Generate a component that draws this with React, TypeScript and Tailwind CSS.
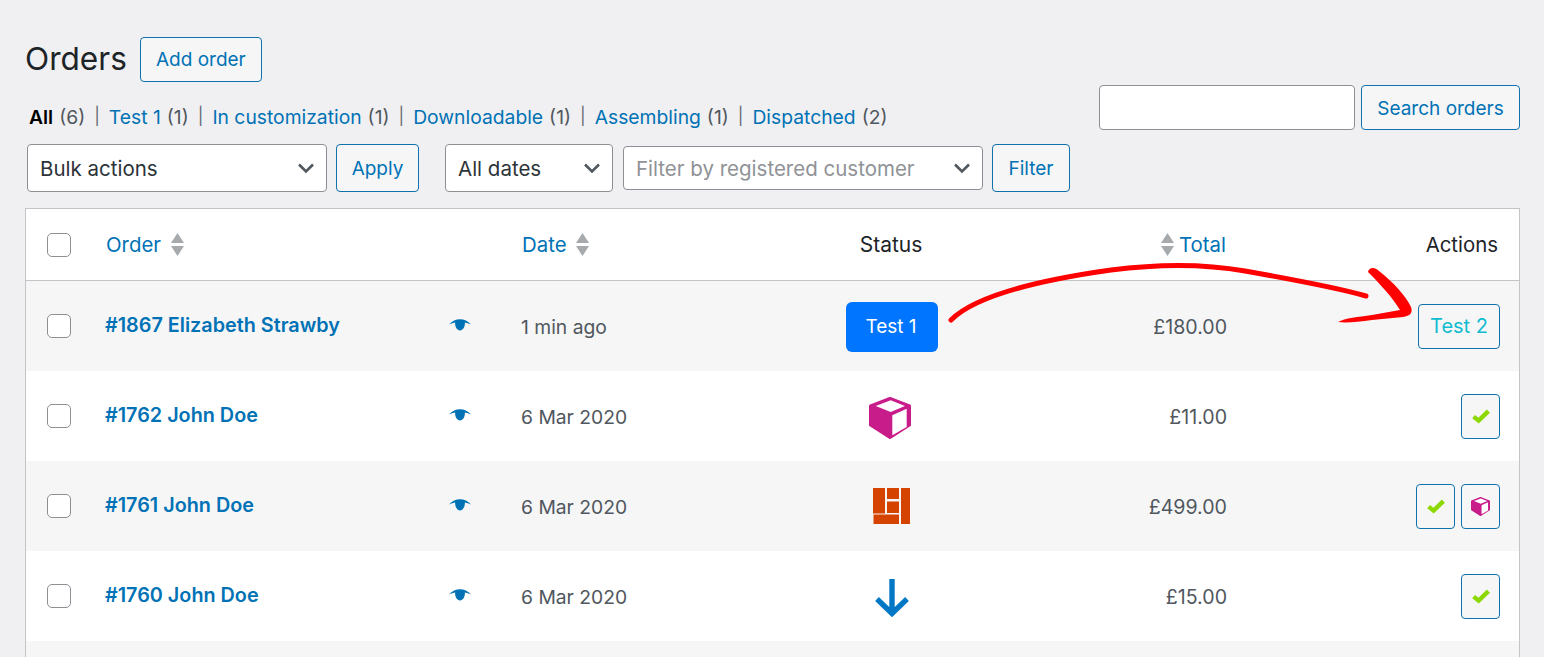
import React from "react";

const Chevron = () => (
  <svg width="18" height="12" viewBox="0 0 18 12" className="shrink-0">
    <path d="M2 2.5 L9 9.5 L16 2.5" fill="none" stroke="#50575e" strokeWidth="2.6" />
  </svg>
);

const Sort = () => (
  <svg width="13" height="23" viewBox="0 0 13 23" className="shrink-0">
    <path d="M6.5 0 L13 10 H0 Z M0 13 H13 L6.5 23 Z" fill="#a7aaad" />
  </svg>
);

const Eye = () => (
  <svg width="22" height="12" viewBox="0 0 22 12">
    <path
      d="M0 5.4 C3 2 7 0.2 11 0.2 C15 0.2 19 2 22 5.4 C19.8 4.4 17.8 3.8 15.9 3.5 C16 8 14 11.4 11 11.4 C8 11.4 6 8 6.1 3.5 C4.2 3.8 2.2 4.4 0 5.4 Z"
      fill="#0072b5"
    />
  </svg>
);

const Cube = ({ size }: { size: number }) => (
  <svg width={size} height={size} viewBox="0 0 42 42">
    <path
      d="M21 1.5 L40.5 9 V28 L21 40.5 L1.5 28 V9 Z"
      fill="#c71c89"
      stroke="#c71c89"
      strokeWidth="3"
      strokeLinejoin="round"
    />
    <path d="M6.7 9 L21.7 3.3 L36 9 L21.7 15 Z" fill="#fff" />
    <path d="M23.3 18.3 L37.7 11.7 V30 L23.3 38.3 Z" fill="#fff" />
  </svg>
);

const Blocks = () => (
  <svg width="37" height="36" viewBox="0 0 37 36">
    <g fill="#d54300">
      <rect x="0" y="0" width="12" height="25.5" />
      <rect x="14" y="0" width="12" height="11" />
      <rect x="14" y="13.5" width="12" height="11.5" />
      <rect x="0.5" y="26.5" width="25.5" height="9.5" />
      <rect x="28" y="0" width="9" height="36" />
    </g>
  </svg>
);

const DownArrow = () => (
  <svg width="34" height="38" viewBox="0 0 34 38">
    <path d="M17 0 V34 M2 20 L17 34.5 L32 20" fill="none" stroke="#0277c6" strokeWidth="5.4" />
  </svg>
);

const Check = () => (
  <svg width="18" height="15" viewBox="0 0 18 15">
    <path d="M1.6 7.6 L6.6 11.6 L16.4 2.2" fill="none" stroke="#8cd800" strokeWidth="4.4" />
  </svg>
);

const Box = () => (
  <span className="block w-[24px] h-[24px] rounded-[5px] border border-[#8c8f94] bg-white shrink-0" />
);

const Btn = ({ children, className = "" }: { children: React.ReactNode; className?: string }) => (
  <button className={`h-[48px] rounded-[4px] border border-[#0f71ad] bg-[#f6f6f7] text-[#0072b5] text-[19px] leading-none flex items-center justify-center shrink-0 ${className}`}>
    {children}
  </button>
);

const IconBtn = ({ children }: { children: React.ReactNode }) => (
  <span className="w-[39px] h-[45px] rounded-[4px] border border-[#0f71ad] bg-[#f6f6f7] flex items-center justify-center">
    {children}
  </span>
);

const Select = ({ label, className = "", muted = false }: { label: string; className?: string; muted?: boolean }) => (
  <div className={`rounded-[4px] border border-[#8c8f94] bg-white flex items-center justify-between pl-[12px] pr-[11px] shrink-0 ${className}`}>
    <span className={`text-[20.5px] leading-none pt-[2px] ${muted ? "text-[#8f9296]" : "text-[#2c3338]"}`}>{label}</span>
    <Chevron />
  </div>
);

const cols = "grid grid-cols-[79px_344px_72px_239px_262px_205px_292px] items-center";

const Row = ({
  name,
  date,
  status,
  total,
  actions,
  shaded,
}: {
  name: string;
  date: string;
  status: React.ReactNode;
  total: string;
  actions: React.ReactNode;
  shaded: boolean;
}) => (
  <div className={`${cols} h-[90px] ${shaded ? "bg-[#f6f6f7]" : "bg-white"}`}>
    <div className="pl-[21px]">
      <Box />
    </div>
    <a className="text-[19.8px] font-semibold text-[#0072b5] -mt-[1px]">{name}</a>
    <div className="-mt-[2px]">
      <Eye />
    </div>
    <div className="text-[19.3px] text-[#50575e] mt-[2px]">{date}</div>
    <div className="flex justify-center">{status}</div>
    <div className="text-[19.6px] text-[#50575e] text-right mt-[4px]">{total}</div>
    <div className="flex justify-end gap-[6px] pr-[19px]">{actions}</div>
  </div>
);

const Tab = ({ label, count, last, current }: { label: string; count: number; last?: boolean; current?: boolean }) => (
  <li className="flex items-center">
    <a className={current ? "font-semibold text-black" : "text-[#0072b5]"}>{label}</a>
    <span className="ml-[6px] text-[#50575e]">({count})</span>
    {!last && <span className="mx-[9px] text-[#646970] text-[17px]">|</span>}
  </li>
);

export default function App() {
  return (
    <div
      className="relative h-[657px] overflow-hidden bg-[#f0f0f2] pl-[25px] pr-[24px]"
      style={{ fontFamily: "Inter, 'Liberation Sans', sans-serif" }}
    >
      <div className="flex justify-between">
        <div className="pt-[37px]">
          <div className="flex items-center gap-[13px]">
            <h1 className="text-[31.6px] leading-none text-[#1d2327] -mt-[2px]">Orders</h1>
            <Btn className="w-[122px] !h-[45px]">Add order</Btn>
          </div>
          <ul className="flex items-center text-[19.3px] h-[28px] mt-[21px] pl-[4px]">
            <Tab label="All" count={6} current />
            <Tab label="Test 1" count={1} />
            <Tab label="In customization" count={1} />
            <Tab label="Downloadable" count={1} />
            <Tab label="Assembling" count={1} />
            <Tab label="Dispatched" count={2} last />
          </ul>
          <div className="flex items-center mt-[13px] pl-[2px]">
            <Select label="Bulk actions" className="w-[300px] h-[48px]" />
            <Btn className="w-[83px] ml-[9px] pt-[1px]">Apply</Btn>
            <Select label="All dates" className="w-[168px] h-[48px] ml-[26px]" />
            <Select label="Filter by registered customer" muted className="w-[360px] h-[44px] ml-[10px]" />
            <Btn className="w-[78px] ml-[9px] pt-[1px]">Filter</Btn>
          </div>
        </div>
        <div className="flex gap-[6px] pt-[85px]">
          <div className="w-[256px] h-[45px] rounded-[4px] border border-[#8c8f94] bg-white" />
          <Btn className="w-[159px] !h-[45px] pt-[2px]">Search orders</Btn>
        </div>
      </div>

      <div className="mt-[16px] border border-[#c3c4c7] bg-white">
        <div className={`${cols} h-[71px] border-b border-[#c3c4c7] box-content text-[20.4px]`}>
          <div className="pl-[21px]">
            <Box />
          </div>
          <div className="flex items-center gap-[10px] pl-[1px] text-[#0072b5]">
            <span className="mt-[2px]">Order</span> <Sort />
          </div>
          <div />
          <div className="flex items-center gap-[9px] pl-[1px] text-[#0072b5]">
            <span className="mt-[2px]">Date</span> <Sort />
          </div>
          <div className="text-center text-[21px] text-[#1d2327]">Status</div>
          <div className="flex items-center justify-end gap-[5px] pr-[1px] text-[#0072b5]">
            <Sort /> <span className="mt-[2px]">Total</span>
          </div>
          <div className="text-right pr-[21px] text-[#1d2327] mt-[2px]">Actions</div>
        </div>

        <Row
          shaded
          name="#1867 Elizabeth Strawby"
          date="1 min ago"
          status={
            <span className="w-[92px] h-[50px] mt-[2px] ml-[2px] pr-[2px] rounded-[6px] bg-[#0075ff] text-white text-[19px] flex items-center justify-center">
              Test 1
            </span>
          }
          total="£180.00"
          actions={
            <span className="w-[82px] h-[45px] rounded-[4px] border border-[#0f71ad] bg-[#f6f6f7] text-[#0fbcd0] text-[20px] flex items-center justify-center">
              Test 2
            </span>
          }
        />
        <Row
          shaded={false}
          name="#1762 John Doe"
          date="6 Mar 2020"
          status={
            <span className="mt-[4px] -ml-[2px]">
              <Cube size={42} />
            </span>
          }
          total="£11.00"
          actions={
            <IconBtn>
              <Check />
            </IconBtn>
          }
        />
        <Row
          shaded
          name="#1761 John Doe"
          date="6 Mar 2020"
          status={<Blocks />}
          total="£499.00"
          actions={
            <>
              <IconBtn>
                <Check />
              </IconBtn>
              <IconBtn>
                <Cube size={19} />
              </IconBtn>
            </>
          }
        />
        <Row
          shaded={false}
          name="#1760 John Doe"
          date="6 Mar 2020"
          status={
            <span className="mt-[4px] ml-[1px]">
              <DownArrow />
            </span>
          }
          total="£15.00"
          actions={
            <IconBtn>
              <Check />
            </IconBtn>
          }
        />
        <div className="h-[90px] bg-[#f6f6f7]" />
      </div>

      <svg className="absolute left-0 top-0 pointer-events-none" width="1544" height="657" viewBox="0 0 1544 657">
        <path
          d="M951 320 C975 296 1040 280 1111 270 C1150 265 1200 263 1245 271 C1290 279 1335 287 1366 296"
          fill="none"
          stroke="#ff0000"
          strokeWidth="5"
          strokeLinecap="round"
        />
        <path
          d="M1368 272 C1369 267 1375 267 1379 271 C1393 282 1406 296 1411 307 C1413 313 1410 316 1403 317 L1372 320 C1358 322 1346 323 1338 322 C1345 318 1358 317 1372 315 L1400 310 C1393 298 1380 284 1368 272 Z"
          fill="#ff0000"
        />
      </svg>
    </div>
  );
}
